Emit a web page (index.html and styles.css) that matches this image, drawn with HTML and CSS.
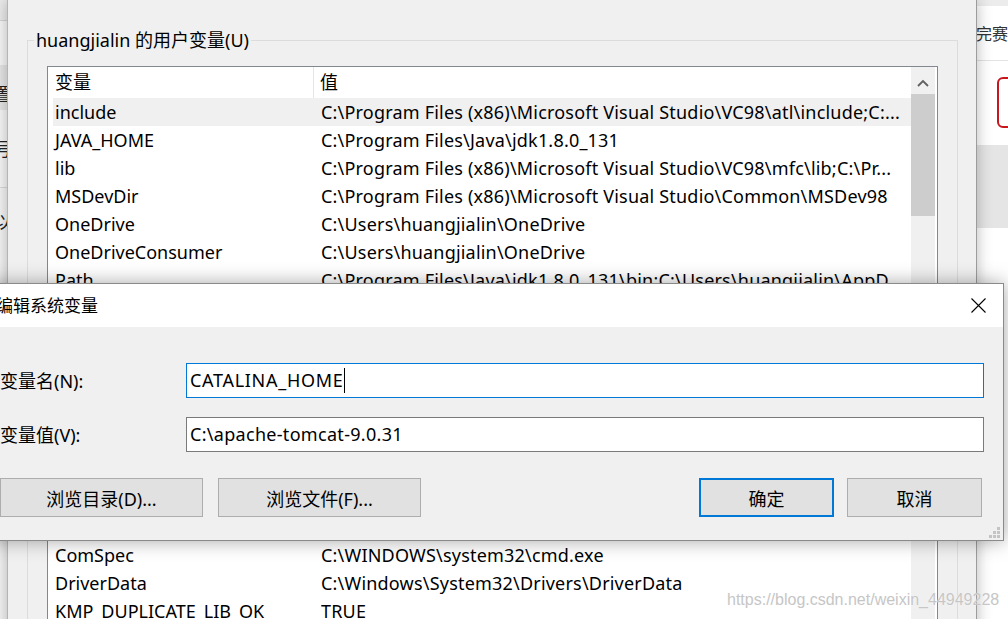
FILE: index.html
```html
<!DOCTYPE html>
<html lang="zh-CN">
<head>
<meta charset="utf-8">
<title>编辑系统变量</title>
<link rel="stylesheet" href="styles.css">
</head>
<body>
<div class="desktop">

  <div class="win-behind">
    <div class="wb-a"></div>
    <div class="wb-b"></div>
    <div class="wb-c"><span class="wb-txt">置</span></div>
    <div class="wb-d"><span class="wb-txt">号</span></div>
    <div class="wb-e"><span class="wb-txt">以</span></div>
  </div>

  <div class="browser">
    <div class="br-top"></div>
    <div class="br-nav">完赛</div>
    <div class="br-gap"><div class="br-redbox"></div></div>
    <div class="br-gray"></div>
    <div class="br-rest"></div>
  </div>

  <div class="envwin">
    <fieldset class="group">
      <legend>huangjialin 的用户变量(U)</legend>
      <div class="listview user-list">
        <div class="lv-main">
          <div class="lv-header"><span class="h1">变量</span><span class="h2">值</span></div>
          <div class="lv-row sel"><span class="c1">include</span><span class="c2">C:\Program Files (x86)\Microsoft Visual Studio\VC98\atl\include;C:...</span></div>
          <div class="lv-row"><span class="c1">JAVA_HOME</span><span class="c2">C:\Program Files\Java\jdk1.8.0_131</span></div>
          <div class="lv-row"><span class="c1">lib</span><span class="c2">C:\Program Files (x86)\Microsoft Visual Studio\VC98\mfc\lib;C:\Pr...</span></div>
          <div class="lv-row"><span class="c1">MSDevDir</span><span class="c2">C:\Program Files (x86)\Microsoft Visual Studio\Common\MSDev98</span></div>
          <div class="lv-row"><span class="c1">OneDrive</span><span class="c2">C:\Users\huangjialin\OneDrive</span></div>
          <div class="lv-row"><span class="c1">OneDriveConsumer</span><span class="c2">C:\Users\huangjialin\OneDrive</span></div>
          <div class="lv-row"><span class="c1">Path</span><span class="c2">C:\Program Files\Java\jdk1.8.0_131\bin;C:\Users\huangjialin\AppD...</span></div>
          <div class="lv-row"><span class="c1">TEMP</span><span class="c2">C:\Users\huangjialin\AppData\Local\Temp</span></div>
        </div>
        <div class="vscroll">
          <div class="vs-btn"><svg width="12" height="8" viewBox="0 0 12 8"><polyline points="1,7 6,2 11,7" fill="none" stroke="#606060" stroke-width="1.8"/></svg></div>
          <div class="vs-thumb"></div>
        </div>
      </div>
      <div class="group-buttons">
        <button class="btn std">新建(N)...</button>
        <button class="btn std">编辑(E)...</button>
        <button class="btn std">删除(D)</button>
      </div>
    </fieldset>

    <fieldset class="group sys">
      <legend>系统变量(S)</legend>
      <div class="listview sys-list">
        <div class="lv-main">
          <div class="lv-header"><span class="h1">变量</span><span class="h2">值</span></div>
          <div class="lv-row"><span class="c1">ChocolateyInstall</span><span class="c2">C:\ProgramData\chocolatey</span></div>
          <div class="lv-row"><span class="c1">CLASSPATH</span><span class="c2">.;%JAVA_HOME%\lib;%JAVA_HOME%\lib\tools.jar</span></div>
          <div class="lv-row"><span class="c1">ComSpec</span><span class="c2">C:\WINDOWS\system32\cmd.exe</span></div>
          <div class="lv-row"><span class="c1">DriverData</span><span class="c2">C:\Windows\System32\Drivers\DriverData</span></div>
          <div class="lv-row"><span class="c1">KMP_DUPLICATE_LIB_OK</span><span class="c2">TRUE</span></div>
          <div class="lv-row"><span class="c1">NUMBER_OF_PROCESSORS</span><span class="c2">8</span></div>
        </div>
        <div class="vscroll">
          <div class="vs-btn"><svg width="12" height="8" viewBox="0 0 12 8"><polyline points="1,7 6,2 11,7" fill="none" stroke="#606060" stroke-width="1.8"/></svg></div>
          <div class="vs-thumb short"></div>
        </div>
      </div>
    </fieldset>
  </div>

  <div class="dialog">
    <div class="titlebar">
      <span class="title">编辑系统变量</span>
      <svg class="close" width="15" height="15" viewBox="0 0 15 15"><path d="M0.5 0.5 L14.5 14.5 M14.5 0.5 L0.5 14.5" stroke="#000" stroke-width="1.1" fill="none"/></svg>
    </div>
    <div class="dlg-body">
      <div class="fields">
        <label class="lbl">变量名(N):</label>
        <div class="input focus"><span class="caps">CATALINA_HOME</span><span class="caret"></span></div>
        <label class="lbl">变量值(V):</label>
        <div class="input"><span class="val">C:\apache-tomcat-9.0.31</span></div>
      </div>
      <div class="actions">
        <button class="btn wide">浏览目录(D)...</button>
        <button class="btn wide second">浏览文件(F)...</button>
        <span class="spacer"></span>
        <button class="btn std primary">确定</button>
        <button class="btn std cancel">取消</button>
      </div>
    </div>
    <svg class="grip" width="11" height="11" viewBox="0 0 11 11">
      <rect x="8" y="0" width="3" height="3" fill="#c4c4c4"/>
      <rect x="4" y="4" width="3" height="3" fill="#c4c4c4"/>
      <rect x="8" y="4" width="3" height="3" fill="#c4c4c4"/>
      <rect x="0" y="8" width="3" height="3" fill="#c4c4c4"/>
      <rect x="4" y="8" width="3" height="3" fill="#c4c4c4"/>
      <rect x="8" y="8" width="3" height="3" fill="#c4c4c4"/>
    </svg>
  </div>

  <div class="watermark">https://blog.csdn.net/weixin_44949228</div>
</div>
</body>
</html>
```

FILE: styles.css
```css
* { box-sizing: border-box; }
html, body { margin: 0; padding: 0; }
body {
  width: 1008px;
  height: 619px;
  overflow: hidden;
  background: #fff;
  font-family: "Noto Sans", "Noto Sans CJK SC", sans-serif;
  font-size: 18px;
  color: #000;
}
.desktop {
  position: relative;
  width: 1008px;
  height: 619px;
  overflow: hidden;
}

/* window behind, left edge */
.win-behind {
  position: absolute;
  left: -200px;
  top: 0;
  width: 208px;
  height: 619px;
  background: #f5f5f5;
  display: flex;
  flex-direction: column;
  z-index: 0;
}
.wb-a { height: 21px; background: #ebebeb; border-bottom: 1px solid #d5d5d5; }
.wb-b { height: 44px; background: #f7f7f7; }
.wb-c, .wb-d, .wb-e {
  display: flex;
  justify-content: flex-end;
  overflow: visible;
}
.wb-c { height: 45px; background: #e6e6e6; align-items: flex-end; padding-bottom: 6px; }
.wb-d { height: 78px; background: #f7f7f7; border-bottom: 1px solid #dadada; align-items: center; }
.wb-e { flex: 1; background: #f5f5f5; align-items: flex-start; padding-top: 24px; }
.wb-txt { font-size: 18px; line-height: 20px; margin-right: -4px; color: #222; }

/* browser at right edge */
.browser {
  position: absolute;
  left: 960px;
  top: 0;
  width: 48px;
  height: 619px;
  background: #fff;
  display: flex;
  flex-direction: column;
  z-index: 0;
}
.br-top { height: 6px; background: #ececec; }
.br-nav {
  height: 55px;
  border-bottom: 1px solid #e3e3e3;
  display: flex;
  align-items: center;
  padding-left: 16px;
  font-size: 16px;
  white-space: nowrap;
  color: #333;
}
.br-gap { height: 84px; padding-top: 16px; }
.br-redbox {
  margin-left: 37px;
  width: 40px;
  height: 51px;
  border: 2px solid #c8161e;
  border-radius: 6px;
}
.br-gray { height: 83px; background: #e5e5e5; }
.br-rest { flex: 1; background: #fff; }

/* environment variables window */
.envwin {
  position: absolute;
  left: 7px;
  top: 0;
  width: 970px;
  height: 700px;
  background: #f0f0f0;
  border-left: 1px solid #b4b4b4;
  border-right: 1px solid #9c9c9c;
  box-shadow: 0 0 14px rgba(0, 0, 0, 0.28);
  padding-top: 28px;
  z-index: 2;
}
.group {
  margin: 0 18px 0 19px;
  padding: 0 19px 12px;
  border: 1px solid #dcdcdc;
  min-width: 0;
}
.group legend {
  margin-left: -13px;
  padding: 0 2px;
  font-size: 18px;
  line-height: 24px;
}
.group.sys { margin-top: 35px; }

.listview {
  margin-top: 14px;
  border: 1px solid #828790;
  background: #fff;
  display: flex;
}
.user-list { height: 250px; }
.sys-list { height: 250px; }
.lv-main { flex: 1; overflow: hidden; min-width: 0; }
.lv-header { display: flex; height: 31px; line-height: 31px; }
.lv-header .h1 {
  width: 266px;
  padding-left: 7px;
  border-right: 1px solid #e5e5e5;
}
.lv-header .h2 { padding-left: 6px; }
.lv-row {
  display: flex;
  height: 28px;
  line-height: 28px;
  margin-left: 5px;
  white-space: nowrap;
}
.lv-row.sel { background: #f0f0f0; }
.lv-row .c1 { width: 268px; padding-left: 2px; flex: none; }
.lv-row .c2 { flex: 1; overflow: hidden; letter-spacing: 0.2px; }

.vscroll {
  width: 24px;
  margin-right: 2px;
  background: #f0f0f0;
  display: flex;
  flex-direction: column;
  flex: none;
}
.vs-btn {
  height: 27px;
  display: flex;
  justify-content: center;
  padding-top: 12px;
}
.vs-thumb { height: 122px; background: #cdcdcd; }
.vs-thumb.short { height: 48px; }

.group-buttons {
  display: flex;
  justify-content: flex-end;
  gap: 12px;
  margin-top: 12px;
}

/* buttons */
.btn {
  height: 39px;
  border: 1px solid #adadad;
  background: #e1e1e1;
  font: inherit;
  font-size: 18px;
  color: #000;
  padding: 0;
  margin: 0;
}
.btn.std { width: 135px; }
.btn.wide { width: 203px; }
.btn.second { margin-left: 15px; }
.btn.primary { border: 2px solid #0078d7; }
.btn.cancel { margin-left: 13px; }

/* front dialog */
.dialog {
  position: absolute;
  left: -12px;
  top: 283px;
  width: 1016px;
  height: 258px;
  background: #f0f0f0;
  border: 1px solid #8a8a8a;
  box-shadow: 0 0 18px rgba(0, 0, 0, 0.35);
  display: flex;
  flex-direction: column;
  z-index: 5;
}
.titlebar {
  height: 43px;
  flex: none;
  background: #fff;
  display: flex;
  align-items: center;
  justify-content: space-between;
  padding-left: 7px;
  padding-right: 17px;
}
.title { font-size: 17px; line-height: 20px; }
.close { display: block; }
.dlg-body {
  flex: 1;
  padding: 36px 19px 0 11px;
}
.fields {
  display: grid;
  grid-template-columns: 186px 1fr;
  grid-auto-rows: 35px;
  row-gap: 19px;
  align-items: center;
}
.lbl { font-size: 18px; line-height: 24px; }
.input {
  height: 35px;
  border: 1px solid #7a7a7a;
  background: #fff;
  padding-left: 3px;
  line-height: 32px;
  white-space: nowrap;
}
.input.focus { border-color: #0078d7; }
.caps { letter-spacing: 0.7px; }
.val { letter-spacing: 0.3px; }
.caret {
  display: inline-block;
  width: 1px;
  height: 25px;
  background: #000;
  vertical-align: middle;
  margin-left: 1px;
  margin-top: -3px;
}
.actions {
  display: flex;
  margin-top: 26px;
  margin-right: 2px;
}
.spacer { flex: 1; }
.grip {
  position: absolute;
  right: 3px;
  bottom: 2px;
}

.watermark {
  position: absolute;
  left: 727px;
  top: 590px;
  font-family: "Liberation Sans", Arial, sans-serif;
  font-size: 16px;
  line-height: 20px;
  color: #c6c6c6;
  text-shadow: 0 0 1px #fff;
  white-space: nowrap;
  z-index: 10;
}
```
